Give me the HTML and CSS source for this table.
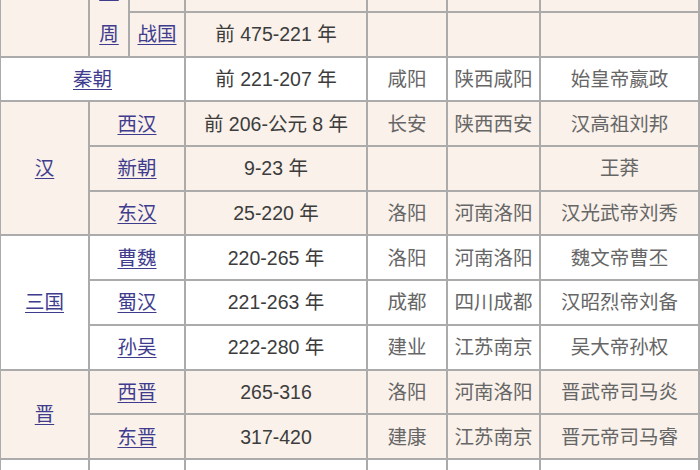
FILE: index.html
```html
<!DOCTYPE html>
<html lang="zh">
<head>
<meta charset="utf-8">
<title>中国朝代表</title>
<link rel="stylesheet" href="styles.css">
</head>
<body>
<table class="dynasties">
  <colgroup>
    <col class="c-a"><col class="c-b"><col class="c-c"><col class="c-d"><col class="c-e"><col class="c-f"><col class="c-g">
  </colgroup>
  <tbody>
    <tr class="tint">
      <td rowspan="3"><a href="#">周</a></td>
      <td colspan="2"><a href="#">西周</a></td>
      <td>前 1046-771 年</td>
      <td>镐京</td>
      <td>陕西西安</td>
      <td>周武王姬发</td>
    </tr>
    <tr class="tint">
      <td rowspan="2" class="stack"><a href="#">东<br>周</a></td>
      <td><a href="#">春秋</a></td>
      <td>前 770-476 年</td>
      <td>洛邑</td>
      <td>河南洛阳</td>
      <td>周平王姬宜臼</td>
    </tr>
    <tr class="tint">
      <td><a href="#">战国</a></td>
      <td>前 475-221 年</td>
      <td></td>
      <td></td>
      <td></td>
    </tr>
    <tr>
      <td colspan="3"><a href="#">秦朝</a></td>
      <td>前 221-207 年</td>
      <td>咸阳</td>
      <td>陕西咸阳</td>
      <td>始皇帝嬴政</td>
    </tr>
    <tr class="tint">
      <td rowspan="3"><a href="#">汉</a></td>
      <td colspan="2"><a href="#">西汉</a></td>
      <td>前 206-公元 8 年</td>
      <td>长安</td>
      <td>陕西西安</td>
      <td>汉高祖刘邦</td>
    </tr>
    <tr class="tint">
      <td colspan="2"><a href="#">新朝</a></td>
      <td>9-23 年</td>
      <td></td>
      <td></td>
      <td>王莽</td>
    </tr>
    <tr class="tint">
      <td colspan="2"><a href="#">东汉</a></td>
      <td>25-220 年</td>
      <td>洛阳</td>
      <td>河南洛阳</td>
      <td>汉光武帝刘秀</td>
    </tr>
    <tr>
      <td rowspan="3"><a href="#">三国</a></td>
      <td colspan="2"><a href="#">曹魏</a></td>
      <td>220-265 年</td>
      <td>洛阳</td>
      <td>河南洛阳</td>
      <td>魏文帝曹丕</td>
    </tr>
    <tr>
      <td colspan="2"><a href="#">蜀汉</a></td>
      <td>221-263 年</td>
      <td>成都</td>
      <td>四川成都</td>
      <td>汉昭烈帝刘备</td>
    </tr>
    <tr>
      <td colspan="2"><a href="#">孙吴</a></td>
      <td>222-280 年</td>
      <td>建业</td>
      <td>江苏南京</td>
      <td>吴大帝孙权</td>
    </tr>
    <tr class="tint">
      <td rowspan="2"><a href="#">晋</a></td>
      <td colspan="2"><a href="#">西晋</a></td>
      <td>265-316</td>
      <td>洛阳</td>
      <td>河南洛阳</td>
      <td>晋武帝司马炎</td>
    </tr>
    <tr class="tint">
      <td colspan="2"><a href="#">东晋</a></td>
      <td>317-420</td>
      <td>建康</td>
      <td>江苏南京</td>
      <td>晋元帝司马睿</td>
    </tr>
    <tr>
      <td rowspan="2"><a href="#">南北朝</a></td>
      <td colspan="2"><a href="#">南朝宋</a></td>
      <td>420-479</td>
      <td>建康</td>
      <td>江苏南京</td>
      <td>宋武帝刘裕</td>
    </tr>
  </tbody>
</table>
</body>
</html>
```

FILE: styles.css
```css
html, body {
  margin: 0;
  padding: 0;
  background: #ffffff;
  overflow: hidden;
}

body {
  font-family: "Liberation Sans", "Noto Sans CJK SC", sans-serif;
}

.dynasties {
  border-collapse: collapse;
  table-layout: fixed;
  width: 699px;
  margin-top: -79px;
  margin-left: -1px;
}

.c-a { width: 89px; }
.c-b { width: 40px; }
.c-c { width: 56px; }
.c-d { width: 182px; }
.c-e { width: 80px; }
.c-f { width: 93px; }
.c-g { width: 159px; }

.dynasties tr {
  height: 44.7px;
}

.dynasties td {
  border: 2px solid #ababab;
  padding: 0;
  text-align: center;
  vertical-align: middle;
  font-size: 19.5px;
  line-height: 24px;
  color: #3c3c3c;
  white-space: nowrap;
  overflow: hidden;
}

.dynasties td:nth-last-child(-n+3) {
  color: #666666;
}

.dynasties tr.tint td {
  background: #f9f1ea;
}

.dynasties a {
  color: #3f3c8e;
  text-decoration: underline;
  text-underline-offset: 3px;
}

.dynasties td.stack {
  line-height: 44px;
}
```
